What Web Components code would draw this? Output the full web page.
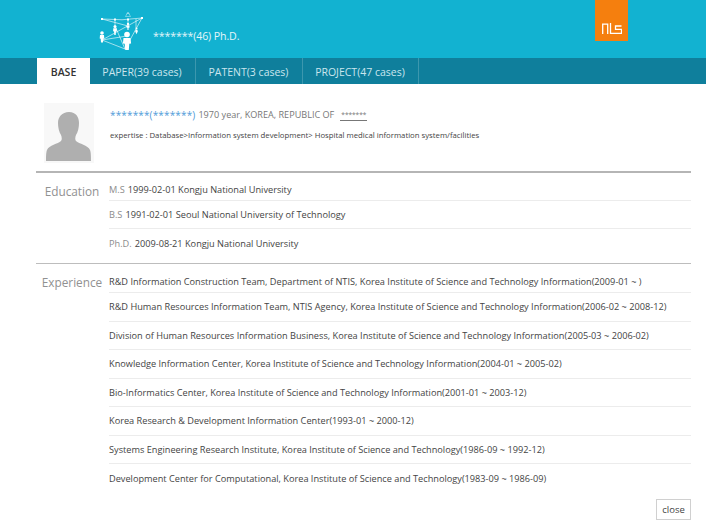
<!DOCTYPE html>
<html><head><meta charset="utf-8"><style>
html,body{margin:0;padding:0;background:#fff}
body{width:706px;height:527px;overflow:hidden;font-family:"Open Sans","Noto Sans",sans-serif}
</style></head><body>
<profile-page></profile-page>
<script>
function def(name,css,html){
  customElements.define(name,class extends HTMLElement{
    constructor(){super();const s=this.attachShadow({mode:'open'});s.innerHTML='<style>'+css+'</style>'+html;}
  });
}
def('site-header',`
:host{display:flex;height:58px;background:#12b2d1;position:relative;color:#e4f6fa}
.logo{margin:11px 0 0 99px;width:44px;height:40px}
.name{margin:29px 0 0 10px;font-size:10.6px;line-height:14px;letter-spacing:-.1px}
.brand{position:absolute;left:595px;top:0;width:33px;height:41px;background:#f57f0e;display:flex;align-items:flex-end;justify-content:center;box-sizing:border-box}
.brand svg{margin-bottom:7px}
`,`<svg class="logo" viewBox="0 0 44 40" fill="none" stroke="#fff" stroke-width=".6">
<path d="M29 1l-2.500 4.500h5zM27.500 3q1.500-1.500 3 0" stroke-width=".4"/>
<path d="M3 8Q23 10 43 7M3 8L29 15M43 7L3 29M3 29L26 38M26 38L43 7M16 15L26 38M3 29L28 25M16 8v6M29 8v5M37 8v9"/>
<g fill="#fff" stroke="none">
<circle cx="3" cy="22" r="1.800"/><path d="M1 24h4l.3 3.500-1 .2-.3 3.800h-2l-.3-3.800-1-.2z"/>
<circle cx="16" cy="15.500" r="1.500"/><path d="M14.300 17.300h3.400l.2 3-1 .2-.2 3.500h-1.400l-.2-3.500-1-.2z"/>
<circle cx="29" cy="13" r="1.200"/><path d="M27.600 14.500h2.800l.2 2-1 .2-.1 2.300h-1l-.1-2.300-1-.2z"/>
<circle cx="37.500" cy="17.500" r="1"/><path d="M36.500 18.800h2l.2 1.700-1.200 2.800-1.200-2.800z"/>
<circle cx="28" cy="23.500" r="2.800"/><path d="M24.500 27h7l.6 5.500-1.800.3-.5 6.200h-3.600l-.5-6.200-1.800-.3z"/>
<rect x="2" y="7" width="2" height="2"/><rect x="15" y="7.500" width="2" height="2"/><rect x="28" y="7.500" width="2" height="2"/><rect x="42" y="6" width="2" height="2"/>
</g></svg>
<span class="name">*******(46) Ph.D.</span>
<div class="brand"><svg width="20" height="11" viewBox="0 0 20 11" fill="none" stroke="#fff" stroke-width="1.300"><path d="M.7 11V1.200h5V11M8.500 0V10.300h3M19.500 3h-6V6.300h6v4h-8"/></svg></div>`);
def('tab-bar',`
:host{display:flex;height:26px;background:#0f7f9c;padding-left:37px;box-sizing:border-box}
`,`<slot></slot>`);
def('tab-item',`
:host{display:flex;align-items:center;justify-content:center;box-sizing:border-box;font-size:10.5px;color:#cbe6ee;border-right:1px solid #3c97ae;height:26px;padding:1px 1px 0 0}
:host([active]){background:#fff;color:#333;font-weight:600;border-right:0;padding-right:0}
`,`<slot></slot>`);
def('person-card',`
:host{display:flex;height:68px;margin:0 0 0 44px;padding-top:19px}
.ph{width:50px;height:60px;background:#f8f8f8;flex:none}
.txt{margin:4px 0 0 16px}
.l1{display:flex;align-items:center;font-size:9.100px;line-height:16px;color:#777;height:16px;white-space:nowrap}
.l1 b{font-weight:400;color:#4f9bd9;font-size:10px;letter-spacing:.15px;margin-right:3px}
.l1 i{font-style:normal;font-size:6.500px;color:#777;border-bottom:1px solid #777;margin-left:6px;line-height:11px;padding:0 1px}
.l2{font-size:7.750px;line-height:12px;color:#444;margin-top:6px;white-space:nowrap}
`,`<svg class="ph" viewBox="0 0 50 60"><path fill="#afafaf" d="M25 9c7 0 10 5 10 11 0 4-1 9-3 12-1 2-1 5 0 6 3 3 12 4 14 9 1 2 1 8 1 11H2c0-3 0-9 1-11 2-5 11-6 14-9 1-1 1-4 0-6-2-3-3-8-3-12 0-6 4-11 11-11z"/></svg>
<div class="txt"><div class="l1"><b>*******(*******)</b>1970 year, KOREA, REPUBLIC OF <i>*******</i></div>
<div class="l2">expertise : Database&gt;Information system development&gt; Hospital medical information system/facilities</div></div>`);
def('info-section',`
:host{display:flex;margin-left:36px;width:655px}
.t{width:73px;flex:none;font-size:11.800px;color:#919191;text-align:center;padding:10px 1px 0 0;box-sizing:border-box;line-height:16px}
.r{flex:1;min-width:0}
:host([kind=edu]){border-top:2px solid #b5b5b5}
:host([kind=exp]){border-top:1px solid #bdbdbd}
`,`<div class="t"><slot name="title"></slot></div><div class="r"><slot></slot></div>`);
def('info-row',`
:host{display:flex;align-items:center;box-sizing:border-box;height:var(--h,28.500px);padding:var(--p,0);font-size:9.200px;color:#444;white-space:nowrap;border-bottom:1px solid #ececec}
:host([last]){border-bottom:0}
::slotted(em){font-style:normal;color:#8c8c8c;margin-right:3px}
`,`<slot></slot>`);
def('close-button',`
:host{display:block;width:35px;height:21px;box-sizing:border-box;border:1px solid #d0d0d0;font-size:9.500px;line-height:19px;text-align:center;color:#444;background:#fff}
`,`<slot></slot>`);
def('profile-page',`
:host{display:block;position:relative;width:706px;height:527px}
.foot{display:flex;justify-content:flex-end;padding:6px 15px 0 0}
`,`<site-header></site-header>
<tab-bar>
<tab-item active style="width:53px">BASE</tab-item>
<tab-item style="width:106px">PAPER(39 cases)</tab-item>
<tab-item style="width:107px">PATENT(3 cases)</tab-item>
<tab-item style="width:116px">PROJECT(47 cases)</tab-item>
</tab-bar>
<person-card></person-card>
<info-section kind="edu"><span slot="title">Education</span>
<info-row style="--h:28px;--p:6px 0 0"><em>M.S</em>1999-02-01 Kongju National University</info-row>
<info-row style="--h:28px"><em>B.S</em>1991-02-01 Seoul National University of Technology</info-row>
<info-row style="--h:34px;--p:0 0 5px" last><em>Ph.D.</em>2009-08-21 Kongju National University</info-row>
</info-section>
<info-section kind="exp"><span slot="title">Experience</span>
<info-row style="--h:29px;--p:7px 0 0">R&amp;D Information Construction Team, Department of NTIS, Korea Institute of Science and Technology Information(2009-01 ~ )</info-row>
<info-row>R&amp;D Human Resources Information Team, NTIS Agency, Korea Institute of Science and Technology Information(2006-02 ~ 2008-12)</info-row>
<info-row>Division of Human Resources Information Business, Korea Institute of Science and Technology Information(2005-03 ~ 2006-02)</info-row>
<info-row>Knowledge Information Center, Korea Institute of Science and Technology Information(2004-01 ~ 2005-02)</info-row>
<info-row>Bio-Informatics Center, Korea Institute of Science and Technology Information(2001-01 ~ 2003-12)</info-row>
<info-row>Korea Research &amp; Development Information Center(1993-01 ~ 2000-12)</info-row>
<info-row>Systems Engineering Research Institute, Korea Institute of Science and Technology(1986-09 ~ 1992-12)</info-row>
<info-row last>Development Center for Computational, Korea Institute of Science and Technology(1983-09 ~ 1986-09)</info-row>
</info-section>
<div class="foot"><close-button>close</close-button></div>`);
</script>
</body></html>
